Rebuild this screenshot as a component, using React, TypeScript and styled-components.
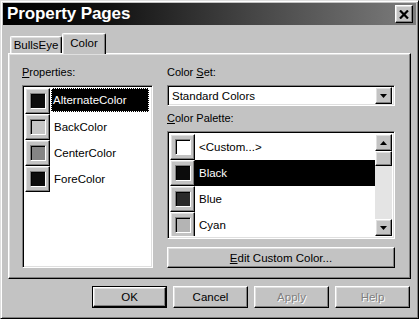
import React from 'react';
import styled, { createGlobalStyle } from 'styled-components';

const colours = {
  face: '#c3c3c3',
  light: '#dfdfdf',
  white: '#ffffff',
  shadow: '#808080',
  dark: '#000000',
  track: '#e4e4e4',
};

const raised = `
  border-top: 1px solid ${colours.white};
  border-left: 1px solid ${colours.white};
  border-right: 1px solid ${colours.dark};
  border-bottom: 1px solid ${colours.dark};
  box-shadow: inset -1px -1px 0 ${colours.shadow}, inset 1px 1px 0 ${colours.light};
`;

const sunken = `
  border-top: 1px solid ${colours.shadow};
  border-left: 1px solid ${colours.shadow};
  border-right: 1px solid ${colours.white};
  border-bottom: 1px solid ${colours.white};
  box-shadow: inset 1px 1px 0 ${colours.dark}, inset -1px -1px 0 ${colours.light};
`;

const GlobalStyle = createGlobalStyle`
  html, body {
    margin: 0;
    padding: 0;
    background: ${colours.face};
  }
  body {
    font-family: "Liberation Sans", Arial, sans-serif;
    font-size: 11px;
    color: #000;
  }
  * { box-sizing: border-box; }
`;

const Window = styled.div`
  width: 419px;
  height: 319px;
  background: ${colours.face};
  border-top: 1px solid ${colours.light};
  border-left: 1px solid ${colours.light};
  border-right: 1px solid ${colours.dark};
  border-bottom: 1px solid ${colours.dark};
  box-shadow: inset 1px 1px 0 ${colours.white}, inset -1px -1px 0 ${colours.shadow};
  padding: 2px;
  display: flex;
  flex-direction: column;
`;

const TitleBar = styled.div`
  height: 22px;
  display: flex;
  align-items: center;
  justify-content: space-between;
  padding: 0 3px 0 4px;
  background: linear-gradient(to right, #000 0%, #111 25%, #454545 60%, #7c7c7c 100%);
  color: #fff;
  font-size: 17px;
  font-weight: 700;
  letter-spacing: -0.1px;
`;

const CloseButton = styled.div`
  width: 18px;
  height: 18px;
  background: ${colours.face};
  ${raised}
  display: flex;
  align-items: center;
  justify-content: center;
`;

const Body = styled.div`
  flex: 1;
  display: flex;
  flex-direction: column;
  padding: 8px 5px 0 5px;
`;

const TabRow = styled.div`
  display: flex;
  align-items: flex-end;
  height: 20px;
  padding-left: 2px;
  position: relative;
  z-index: 1;
`;

const Tab = styled.div<{ $active?: boolean; $w: number }>`
  width: ${p => p.$w}px;
  height: ${p => (p.$active ? 21 : 17)}px;
  margin-bottom: ${p => (p.$active ? -1 : 0)}px;
  background: ${colours.face};
  border-top: 1px solid ${colours.white};
  border-left: 1px solid ${colours.white};
  border-right: 1px solid ${colours.dark};
  border-radius: 2px 2px 0 0;
  box-shadow: inset -1px 0 0 ${colours.shadow}, inset 1px 1px 0 ${colours.light};
  display: flex;
  align-items: center;
  justify-content: center;
  padding-bottom: ${p => (p.$active ? 3 : 0)}px;
  font-size: 11.5px;
`;

const Panel = styled.div`
  height: 226px;
  ${raised}
  display: grid;
  grid-template-columns: 131px 228px;
  column-gap: 14px;
  padding: 12px 0 0 13px;
`;

const Column = styled.div`
  display: flex;
  flex-direction: column;
`;

const Label = styled.div<{ $gap?: number }>`
  line-height: 13px;
  height: 13px;
  margin-top: ${p => p.$gap ?? 0}px;
  font-size: 11px;
`;

const ListBox = styled.div<{ $h: number }>`
  margin-top: 6px;
  height: ${p => p.$h}px;
  background: #fff;
  ${sunken}
  padding: 2px;
  display: flex;
  overflow: hidden;
`;

const Items = styled.div`
  flex: 1;
  display: flex;
  flex-direction: column;
  overflow: hidden;
`;

const Row = styled.div`
  display: flex;
  height: 26px;
  flex-shrink: 0;
`;

const SwatchCell = styled.div`
  width: 25px;
  height: 26px;
  flex-shrink: 0;
  background: ${colours.face};
  ${raised}
  display: flex;
  align-items: center;
  justify-content: center;
`;

const Swatch = styled.div<{ $c: string }>`
  width: 16px;
  height: 16px;
  background: ${p => p.$c};
  border-top: 1px solid ${colours.shadow};
  border-left: 1px solid ${colours.shadow};
  border-right: 1px solid ${colours.white};
  border-bottom: 1px solid ${colours.white};
  box-shadow: inset 1px 1px 0 #000;
`;

const ItemText = styled.div<{ $sel?: boolean; $focus?: boolean }>`
  flex: 1;
  display: flex;
  align-items: center;
  margin: ${p => (p.$focus ? '0 1px 2px 1px' : '0')};
  padding-left: ${p => (p.$focus ? 2 : 4)}px;
  background: ${p => (p.$sel ? '#000' : 'transparent')};
  color: ${p => (p.$sel ? '#fff' : '#000')};
  outline: ${p => (p.$focus ? '1px dotted #fff' : 'none')};
  outline-offset: -1px;
  font-size: 11.5px;
  white-space: nowrap;
`;

const Combo = styled.div`
  margin-top: 6px;
  height: 21px;
  background: #fff;
  ${sunken}
  padding: 2px;
  display: flex;
  align-items: center;
  justify-content: space-between;
  font-size: 11.5px;
  span { padding-left: 2px; }
`;

const ArrowButton = styled.div<{ $h?: number }>`
  width: 17px;
  height: ${p => p.$h ?? 17}px;
  flex-shrink: 0;
  background: ${colours.face};
  ${raised}
  display: flex;
  align-items: center;
  justify-content: center;
`;

const ScrollBar = styled.div`
  width: 17px;
  display: flex;
  flex-direction: column;
  background: ${colours.track};
`;

const Thumb = styled.div`
  height: 15px;
  background: ${colours.face};
  ${raised}
`;

const Track = styled.div`
  flex: 1;
`;

const PushButton = styled.div<{ $default?: boolean; $disabled?: boolean; $w?: number; $gap?: number }>`
  width: ${p => (p.$w ? `${p.$w}px` : '100%')};
  height: ${p => (p.$gap !== undefined ? 21 : 22)}px;
  flex-shrink: 0;
  margin-top: ${p => p.$gap ?? 0}px;
  background: ${colours.face};
  ${raised}
  ${p => (p.$default ? `outline: 1px solid #000; outline-offset: -1px; border-width: 2px;` : '')}
  display: flex;
  align-items: center;
  justify-content: center;
  color: ${p => (p.$disabled ? colours.shadow : '#000')};
  text-shadow: ${p => (p.$disabled ? `1px 1px 0 ${colours.white}` : 'none')};
  font-size: 11.5px;
  line-height: 14px;
  white-space: nowrap;
`;

const ButtonRow = styled.div`
  display: flex;
  justify-content: flex-end;
  gap: 6px;
  margin-top: 7px;
  padding-right: 1px;
`;

const Down = () => (
  <svg width="7" height="4" viewBox="0 0 7 4"><path d="M0 0h7L3.5 4z" fill="#000" /></svg>
);
const Up = () => (
  <svg width="7" height="4" viewBox="0 0 7 4"><path d="M0 4h7L3.5 0z" fill="#000" /></svg>
);

const properties = [
  { name: 'AlternateColor', colour: '#0c0c0c' },
  { name: 'BackColor', colour: '#c6c6c6' },
  { name: 'CenterColor', colour: '#858585' },
  { name: 'ForeColor', colour: '#0c0c0c' },
];

// last row only peeks in at the bottom edge, its label is below the fold
const palette = [
  { name: '<Custom...>', colour: '#ffffff' },
  { name: 'Black', colour: '#0c0c0c' },
  { name: 'Blue', colour: '#2a2a2a' },
  { name: 'Cyan', colour: '#b4b4b4' },
  { name: '', colour: '#5a5a5a' },
];

export default function App() {
  return (
    <>
      <GlobalStyle />
      <Window>
        <TitleBar>
          <span>Property Pages</span>
          <CloseButton>
            <svg width="10" height="9" viewBox="0 0 10 9">
              <path d="M1 0.5L9 8.5M9 0.5L1 8.5" stroke="#000" strokeWidth="2.2" />
            </svg>
          </CloseButton>
        </TitleBar>
        <Body>
          <TabRow>
            <Tab $w={52}>BullsEye</Tab>
            <Tab $w={44} $active>Color</Tab>
          </TabRow>
          <Panel>
            <Column>
              <Label><u>P</u>roperties:</Label>
              <ListBox $h={183}>
                <Items>
                  {properties.map((p, i) => (
                    <Row key={p.name}>
                      <SwatchCell><Swatch $c={p.colour} /></SwatchCell>
                      <ItemText $sel={i === 0} $focus={i === 0}>{p.name}</ItemText>
                    </Row>
                  ))}
                </Items>
              </ListBox>
            </Column>
            <Column>
              <Label>Color <u>S</u>et:</Label>
              <Combo>
                <span>Standard Colors</span>
                <ArrowButton $h={17}><Down /></ArrowButton>
              </Combo>
              <Label $gap={6}><u>C</u>olor Palette:</Label>
              <ListBox $h={108}>
                <Items>
                  {palette.map((p, i) => (
                    <Row key={i}>
                      <SwatchCell><Swatch $c={p.colour} /></SwatchCell>
                      <ItemText $sel={i === 1}>{p.name}</ItemText>
                    </Row>
                  ))}
                </Items>
                <ScrollBar>
                  <ArrowButton><Up /></ArrowButton>
                  <Thumb />
                  <Track />
                  <ArrowButton><Down /></ArrowButton>
                </ScrollBar>
              </ListBox>
              <PushButton $gap={8}><u>E</u>dit Custom Color...</PushButton>
            </Column>
          </Panel>
          <ButtonRow>
            <PushButton $w={75} $default>OK</PushButton>
            <PushButton $w={75}>Cancel</PushButton>
            <PushButton $w={75} $disabled>Apply</PushButton>
            <PushButton $w={75} $disabled>Help</PushButton>
          </ButtonRow>
        </Body>
      </Window>
    </>
  );
}
